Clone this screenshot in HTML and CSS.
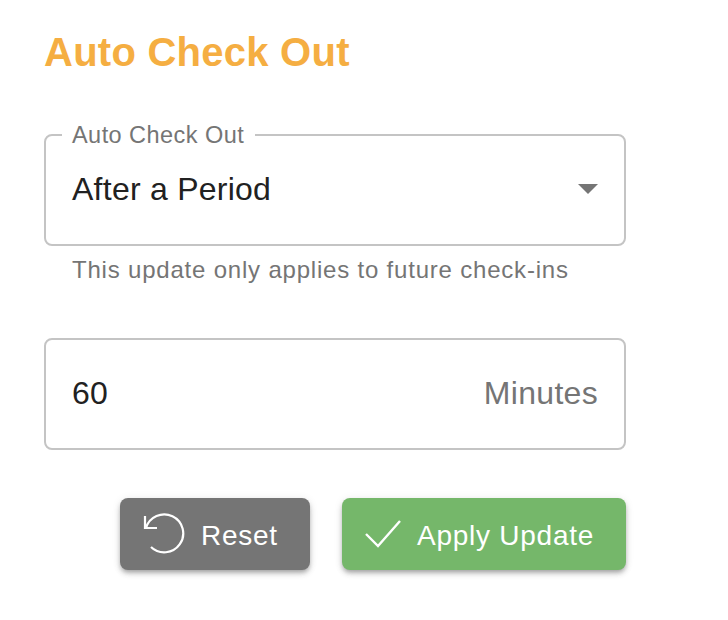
FILE: index.html
```html
<!DOCTYPE html>
<html lang="en">
<head>
  <meta charset="UTF-8">
  <title>Auto Check Out</title>
  <link rel="stylesheet" href="styles.css">
</head>
<body>
  <div class="wrap">
    <h1 class="title">Auto Check Out</h1>
    <div class="field field-select">
      <span class="legend">Auto Check Out</span>
      <span class="value">After a Period</span>
      <svg class="arrow" width="20" height="10" viewBox="0 0 20 10"><path d="M0 0h20L10 10z" fill="#757575"/></svg>
    </div>
    <p class="hint">This update only applies to future check-ins</p>
    <div class="field field-input">
      <span class="value">60</span>
      <span class="unit">Minutes</span>
    </div>
    <div class="actions">
      <button class="btn btn-reset">
        <svg width="42" height="42" viewBox="0 0 42 42" fill="none" stroke="#fff" stroke-width="2.2"><path d="M2 3v12h12"/><path d="M3 15A19 19 0 1 1 8 34"/></svg>
        <span class="btn-label">Reset</span>
      </button>
      <button class="btn btn-apply">
        <svg width="36" height="30" viewBox="0 0 36 30" fill="none" stroke="#fff" stroke-width="2.4"><path d="M1 15l12 12L35 2"/></svg>
        <span class="btn-label">Apply Update</span>
      </button>
    </div>
  </div>
</body>
</html>
```
FILE: styles.css
```css
html,body,div,h1,p{
  margin: 0;
  padding: 0;
}
body{
  background-color: #fff;
  font-family: "Liberation Sans", Arial, sans-serif;
  color: #212121;
}
.wrap{
  width: 582px;
  padding: 31px 0 40px 44px;
}
.title{
  font-size: 40px;
  line-height: 42px;
  font-weight: 700;
  color: #f5ae42;
  letter-spacing: .25px;
}
.field{
  position: relative;
  box-sizing: border-box;
  height: 112px;
  border: 2px solid #c4c4c4;
  border-radius: 8px;
  display: flex;
  align-items: center;
  justify-content: space-between;
  padding: 0 26px 2px;
}
.field-select{
  margin-top: 61px;
}
.field-input{
  margin-top: 55px;
}
.legend{
  position: absolute;
  top: -14px;
  left: 16px;
  padding: 0 11px 0 10px;
  background-color: #fff;
  font-size: 23.5px;
  line-height: 26px;
  color: #757575;
  letter-spacing: .45px;
}
.value{
  font-size: 32px;
  letter-spacing: .25px;
}
.unit{
  font-size: 32px;
  color: #757575;
  letter-spacing: .3px;
}
.hint{
  margin: 11px 0 0 28px;
  font-size: 24px;
  line-height: 26px;
  color: #757575;
  letter-spacing: .8px;
}
.actions{
  display: flex;
  justify-content: flex-end;
  gap: 32px;
  margin-top: 48px;
}
.btn{
  box-sizing: border-box;
  display: flex;
  align-items: center;
  gap: 16px;
  height: 72px;
  padding: 0 0 0 23px;
  border: none;
  border-radius: 8px;
  color: #fff;
  font-family: inherit;
  font-size: 28px;
  letter-spacing: .75px;
  box-shadow: 0 3px 4px -1px rgba(0,0,0,.25), 0 4px 6px rgba(0,0,0,.12), 0 1px 10px rgba(0,0,0,.08);
}
.btn-label{
  padding-top: 3px;
}
.btn-reset{
  width: 190px;
  background-color: #757575;
}
.btn-apply{
  width: 284px;
  background-color: #75b76a;
}
```
